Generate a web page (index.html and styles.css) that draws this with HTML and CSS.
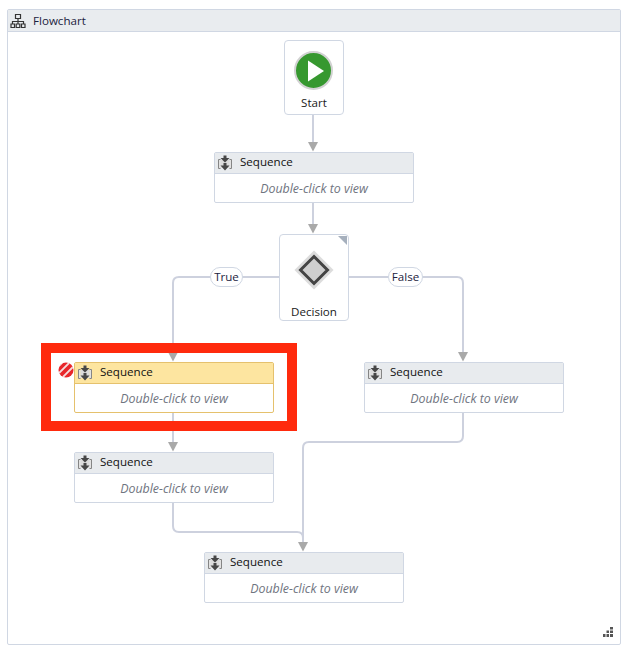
FILE: index.html
```html
<!DOCTYPE html>
<html lang="en">
<head>
<meta charset="utf-8">
<title>Flowchart</title>
<link rel="stylesheet" href="styles.css">
</head>
<body>
<svg width="0" height="0" class="defs" aria-hidden="true">
  <symbol id="seq" viewBox="0 0 16 16">
    <path d="M3.500 4.500H1.500V13.500H3.500M12.500 4.500H14.500V13.500H12.500" fill="#e2e2e2" stroke="#858585"/>
    <path d="M3.500 5H12.500V13H3.500Z" fill="#dcdcdc"/>
    <path d="M6.500 0.500H9.500V3H12.500L8 7.500 3.500 3H6.500Z" fill="#474747"/>
    <path d="M6.500 8H9.500V10.500H12.500L8 15.500 3.500 10.500H6.500Z" fill="#474747"/>
  </symbol>
</svg>
<main class="panel">
  <header class="panel-head">
    <svg class="flow-icon" width="16" height="16" viewBox="0 0 16 16">
      <path d="M5.500 1.500H10.500V5.500H5.500ZM8 5.500V8.500M2.500 11V8.500H13.500V11M8 8.500V11M1 11H4.500V14.500H1ZM6.200 11H9.800V14.500H6.200ZM11.500 11H15V14.500H11.500Z" fill="none" stroke="#333" stroke-width="1.200"/>
    </svg>
    <span class="panel-title">Flowchart</span>
  </header>
  <div class="canvas">
    <svg class="wires" width="613" height="612" viewBox="8 32 613 612">
      <g class="wire">
        <path d="M313 115V143"/>
        <path d="M313 203V224"/>
        <path d="M279 277H179Q173 277 173 283V353"/>
        <path d="M349 277H457Q463 277 463 283V353"/>
        <path d="M173 413V442"/>
        <path d="M463 413V436Q463 442 457 442H309Q303 442 303 448V543"/>
        <path d="M173 503V526Q173 532 179 532H297Q303 532 303 538"/>
      </g>
      <g class="head">
        <path d="M308 142H318L313 151.500Z"/>
        <path d="M308 224H318L313 233.500Z"/>
        <path d="M168 352H178L173 361.500Z"/>
        <path d="M458 352H468L463 361.500Z"/>
        <path d="M168 442H178L173 451.500Z"/>
        <path d="M298 542H308L303 551.500Z"/>
      </g>
    </svg>

    <div class="mark"></div>

    <div class="tile tile-start">
      <svg width="40" height="40" viewBox="0 0 40 40">
        <circle cx="19.500" cy="19.500" r="18.500" fill="#36982f" stroke="#d2d2d2" stroke-width="2"/>
        <path d="M14 9.500L30 20 14 30.500Z" fill="#fff"/>
      </svg>
      <span class="tile-label">Start</span>
    </div>

    <div class="tile tile-decision">
      <span class="corner"></span>
      <svg class="diamond" width="40" height="40" viewBox="0 0 40 40">
        <path d="M20 0.500L39.500 20 20 39.500 0.500 20Z" fill="#dcdcdc"/>
        <path d="M20 6.500L33.500 20 20 33.500 6.500 20Z" fill="#cfcfcf" stroke="#444" stroke-width="3"/>
      </svg>
      <span class="tile-label">Decision</span>
    </div>

    <span class="pill pill-true">True</span>
    <span class="pill pill-false">False</span>

    <article class="seq seq-1">
      <div class="seq-head"><svg class="seq-icon" width="16" height="16"><use href="#seq"/></svg><span class="seq-title">Sequence</span></div>
      <div class="seq-body">Double-click to view</div>
    </article>
    <article class="seq seq-2 seq-active">
      <div class="seq-head"><svg class="seq-icon" width="16" height="16"><use href="#seq"/></svg><span class="seq-title">Sequence</span></div>
      <div class="seq-body">Double-click to view</div>
      <svg class="breakpoint" width="16" height="16" viewBox="0 0 16 16">
        <defs><clipPath id="bp"><circle cx="8" cy="8" r="7.500"/></clipPath></defs>
        <circle cx="8" cy="8" r="7.500" fill="#e8262a"/>
        <path clip-path="url(#bp)" d="M-1 6L6 -1M0 12L12 0M4 16L16 4M10 18L18 10" stroke="#f5dcdc" stroke-width="1.800"/>
      </svg>
    </article>
    <article class="seq seq-3">
      <div class="seq-head"><svg class="seq-icon" width="16" height="16"><use href="#seq"/></svg><span class="seq-title">Sequence</span></div>
      <div class="seq-body">Double-click to view</div>
    </article>
    <article class="seq seq-4">
      <div class="seq-head"><svg class="seq-icon" width="16" height="16"><use href="#seq"/></svg><span class="seq-title">Sequence</span></div>
      <div class="seq-body">Double-click to view</div>
    </article>
    <article class="seq seq-5">
      <div class="seq-head"><svg class="seq-icon" width="16" height="16"><use href="#seq"/></svg><span class="seq-title">Sequence</span></div>
      <div class="seq-body">Double-click to view</div>
    </article>

    <svg class="grip" width="10" height="10" viewBox="0 0 10 10">
      <path d="M7 0H10V2.500H7ZM7 3.500H10V6H7ZM7 7H10V10H7ZM3.500 3.500H6V6H3.500ZM3.500 7H6V10H3.500ZM0 7H2.500V10H0Z" fill="#555"/>
    </svg>
  </div>
</main>
</body>
</html>
```

FILE: styles.css
```css
* { box-sizing: border-box; }
html, body { margin: 0; padding: 0; }
body {
  width: 635px;
  height: 656px;
  background: #fff;
  padding: 9px 14px 11px 7px;
  font-family: "Open Sans", "Noto Sans", "Liberation Sans", sans-serif;
  font-size: 11.6px;
  color: #1a1a1a;
}
.defs { position: absolute; }
.panel {
  width: 614px;
  height: 636px;
  border: 1px solid #d0d7e3;
  border-radius: 2px;
  display: flex;
  flex-direction: column;
}
.panel-head {
  height: 22px;
  flex: none;
  background: #e9ecef;
  border-bottom: 1px solid #d0d7e3;
  display: flex;
  align-items: center;
  gap: 7px;
  padding-left: 2px;
}
.panel-title { color: #1c2340; line-height: 18px; }
.canvas { position: relative; flex: 1; }
.wires { position: absolute; left: 0; top: 0; }
.wire path { fill: none; stroke: #cdd1de; stroke-width: 2; }
.head path { fill: #a9a9a9; }

.mark {
  position: absolute;
  left: 33px;
  top: 311px;
  width: 256px;
  height: 88px;
  border: 10px solid #ff2a0d;
}

.tile {
  position: absolute;
  background: #fff;
  border: 1px solid #d0d7e3;
  border-radius: 4px;
  display: flex;
  flex-direction: column;
  align-items: center;
}
.tile-label { color: #1a1a1a; line-height: 16px; }
.tile-start { left: 276px; top: 8px; width: 60px; height: 75px; padding-top: 10px; gap: 4px; }
.tile-decision { left: 271px; top: 202px; width: 70px; height: 87px; padding-top: 15px; gap: 14px; }
.corner {
  position: absolute;
  right: 1px;
  top: 1px;
  border-style: solid;
  border-width: 0 9px 9px 0;
  border-color: transparent #a6b0bd transparent transparent;
}

.pill {
  position: absolute;
  height: 20px;
  background: #fff;
  border: 1px solid #d0d7e3;
  border-radius: 10px;
  line-height: 18px;
  text-align: center;
  color: #1c2340;
}
.pill-true { left: 202px; top: 235px; width: 33px; }
.pill-false { left: 380px; top: 235px; width: 35px; }

.seq {
  position: absolute;
  width: 200px;
  height: 51px;
  background: #fff;
  border: 1px solid #d0d7e3;
  border-radius: 2px;
  display: flex;
  flex-direction: column;
}
.seq-1 { left: 206px; top: 120px; }
.seq-2 { left: 66px; top: 330px; }
.seq-3 { left: 356px; top: 330px; }
.seq-4 { left: 66px; top: 420px; }
.seq-5 { left: 196px; top: 520px; }
.seq-head {
  height: 21px;
  flex: none;
  background: #e8ebee;
  border-bottom: 1px solid #d0d7e3;
  display: flex;
  align-items: center;
  gap: 7px;
  padding-left: 2px;
  color: #111;
}
.seq-title { line-height: 16px; margin-top: -3px; }
.seq-body {
  flex: 1;
  display: flex;
  align-items: center;
  justify-content: center;
  font-size: 12.4px;
  font-style: italic;
  color: #6f7480;
}
.seq-active { border-color: #e5c16d; }
.seq-active .seq-head { background: #fde5a0; border-bottom-color: #e5c16d; }
.breakpoint { position: absolute; left: -17px; top: -1px; }
.grip { position: absolute; right: 7px; bottom: 7px; }
```
